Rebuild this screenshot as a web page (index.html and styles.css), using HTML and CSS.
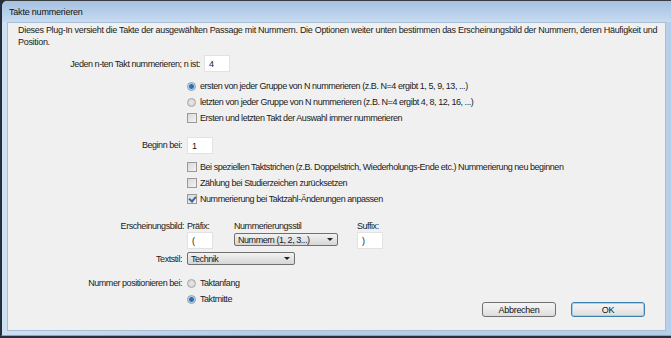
FILE: index.html
```html
<!DOCTYPE html>
<html lang="de">
<head>
    <meta charset="UTF-8">
    <title>Takte nummerieren</title>
    <link rel="stylesheet" href="styles.css">
</head>
<body>
    <div class="window">
        <div class="titlebar">Takte nummerieren</div>
        <div class="client">
            <p class="intro">Dieses Plug-In versieht die Takte der ausgewählten Passage mit Nummern. Die Optionen weiter unten bestimmen das Erscheinungsbild der Nummern, deren Häufigkeit und<br>Position.</p>

            <div class="row-first">
                <span class="lbl-wide">Jeden n-ten Takt nummerieren; n ist:</span>
                <span class="edit">4</span>
            </div>

            <div class="group group-n">
                <div class="opt"><span class="radio on"></span>ersten von jeder Gruppe von N nummerieren (z.B. N=4 ergibt 1, 5, 9, 13, ...)</div>
                <div class="opt"><span class="radio"></span>letzten von jeder Gruppe von N nummerieren (z.B. N=4 ergibt 4, 8, 12, 16, ...)</div>
                <div class="opt"><span class="check"></span>Ersten und letzten Takt der Auswahl immer nummerieren</div>
            </div>

            <div class="row row-begin">
                <span class="lbl">Beginn bei:</span>
                <span class="edit">1</span>
            </div>

            <div class="group group-reset">
                <div class="opt"><span class="check"></span>Bei speziellen Taktstrichen (z.B. Doppelstrich, Wiederholungs-Ende etc.) Nummerierung neu beginnen</div>
                <div class="opt"><span class="check"></span>Zählung bei Studierzeichen zurücksetzen</div>
                <div class="opt"><span class="check on"></span>Nummerierung bei Taktzahl-Änderungen anpassen</div>
            </div>

            <div class="row row-look">
                <span class="lbl">Erscheinungsbild:</span>
                <div class="look">
                    <div class="look-col">
                        <span class="cap">Präfix:</span>
                        <span class="edit">(</span>
                    </div>
                    <div class="look-col col-style">
                        <span class="cap">Nummerierungsstil</span>
                        <span class="combo combo-style">Nummern (1, 2, 3...)<i class="arrow"></i></span>
                    </div>
                    <div class="look-col col-suffix">
                        <span class="cap">Suffix:</span>
                        <span class="edit">)</span>
                    </div>
                </div>
            </div>

            <div class="row row-textstyle">
                <span class="lbl">Textstil:</span>
                <span class="combo combo-text">Technik<i class="arrow"></i></span>
            </div>

            <div class="row row-pos">
                <span class="lbl">Nummer positionieren bei:</span>
                <div class="pos-list">
                    <div class="opt"><span class="radio"></span>Taktanfang</div>
                    <div class="opt"><span class="radio on"></span>Taktmitte</div>
                </div>
                <div class="buttons">
                    <button class="btn">Abbrechen</button>
                    <button class="btn default">OK</button>
                </div>
            </div>
        </div>
    </div>
</body>
</html>
```

FILE: styles.css
```css
* {
    margin: 0;
    padding: 0;
    box-sizing: border-box;
}
body {
    width: 671px;
    height: 338px;
    overflow: hidden;
    background: #26303c;
    font-family: "Liberation Sans", Arial, sans-serif;
    font-size: 9px;
    letter-spacing: -0.45px;
    color: #1a1a1a;
}
.window {
    margin-left: 1px;
    width: 680px;
    height: 336px;
    border-top: 1px solid #3b3b3b;
    border-left: 1px solid #2a2a2a;
    border-bottom: 1px solid #3cc3e6;
    border-top-left-radius: 6px;
    background: linear-gradient(to right, #cfe0f2, #b3cce8 40%, #b8cfe9);
    display: flex;
    flex-direction: column;
    padding: 0 15px 4px 5px;
}
.titlebar {
    height: 21px;
    line-height: 22px;
    margin: 0 -15px 0 -5px;
    padding-left: 7px;
    background: linear-gradient(to bottom, #a4c1e2, #bcd3ec 70%, #c8dbef);
    border-top-left-radius: 6px;
    color: #111;
    letter-spacing: -0.2px;
}
.client {
    flex: 1;
    width: 659px;
    background: #f0f0f0;
    border: 1px solid #a8bdd6;
    padding: 1px 0 0 10px;
    display: flex;
    flex-direction: column;
}
.intro {
    line-height: 12px;
    white-space: nowrap;
    letter-spacing: -0.3px;
}
.row-first {
    display: flex;
    align-items: center;
    margin-top: 7px;
    height: 17px;
}
.lbl-wide {
    width: 186px;
    text-align: right;
    padding-right: 4px;
}
.edit {
    display: inline-block;
    width: 26px;
    height: 17px;
    line-height: 17px;
    background: #fff;
    border: 1px solid #e2e2e2;
    padding-left: 4px;
}
.group {
    margin-left: 169px;
    display: flex;
    flex-direction: column;
}
.group-n {
    margin-top: 6px;
}
.opt {
    display: flex;
    align-items: center;
    height: 16px;
    white-space: nowrap;
}
.radio {
    width: 9px;
    height: 9px;
    border-radius: 50%;
    border: 1px solid #a5a5a5;
    background: radial-gradient(circle, #e8e8e8, #d0d0d0);
    margin-right: 4px;
    flex-shrink: 0;
}
.radio.on {
    background: radial-gradient(circle, #2d6fb5 0 2px, #7fb2e0 2.5px, #dfe7ef 3.5px);
    border-color: #8c9bab;
}
.check {
    width: 10px;
    height: 10px;
    border: 1px solid #9a9a9a;
    background: linear-gradient(to bottom right, #d8d8d8, #f4f4f4);
    margin-right: 3px;
    flex-shrink: 0;
    position: relative;
}
.check.on::after {
    content: "";
    position: absolute;
    left: 2px;
    top: 0;
    width: 3px;
    height: 5px;
    border-right: 2px solid #3b64a4;
    border-bottom: 2px solid #3b64a4;
    transform: rotate(40deg);
}
.row {
    display: flex;
    align-items: flex-start;
}
.lbl {
    width: 169px;
    text-align: right;
    padding-right: 5px;
    flex-shrink: 0;
}
.row-begin {
    margin-top: 10px;
    align-items: center;
    height: 18px;
}
.group-reset {
    margin-top: 5px;
}
.row-look {
    margin-top: 13px;
}
.row-look .lbl {
    line-height: 12px;
    padding-right: 3px;
}
.look {
    display: flex;
}
.look-col {
    display: flex;
    flex-direction: column;
    align-items: flex-start;
}
.col-style {
    margin-left: 21px;
}
.col-suffix {
    margin-left: 19px;
}
.cap {
    line-height: 12px;
    margin-bottom: 0;
}
.col-style .combo {
    margin-top: 1px;
}
.combo {
    display: inline-flex;
    align-items: center;
    justify-content: space-between;
    height: 13px;
    padding: 0 4px 0 3px;
    border: 1px solid #707070;
    border-radius: 2px;
    background: linear-gradient(to bottom, #f2f2f2, #e4e4e4 50%, #d6d6d6);
    white-space: nowrap;
}
.combo-style {
    width: 104px;
}
.combo-text {
    width: 108px;
}
.arrow {
    width: 0;
    height: 0;
    border-left: 3px solid transparent;
    border-right: 3px solid transparent;
    border-top: 3px solid #222;
}
.row-textstyle {
    margin-top: 3px;
    align-items: center;
    height: 13px;
}
.row-pos {
    margin-top: 10px;
}
.row-pos .lbl {
    line-height: 16px;
}
.pos-list {
    display: flex;
    flex-direction: column;
}
.buttons {
    display: flex;
    gap: 15px;
    margin-left: auto;
    margin-right: 20px;
    margin-top: 27px;
}
.btn {
    width: 74px;
    height: 15px;
    flex-shrink: 0;
    font-family: "Liberation Sans", Arial, sans-serif;
    font-size: 9px;
    letter-spacing: -0.3px;
    color: #111;
    border: 1px solid #707070;
    border-radius: 3px;
    background: linear-gradient(to bottom, #f4f4f4, #ebebeb 50%, #dcdcdc);
}
.btn.default {
    border-color: #3c7fb1;
    box-shadow: inset 0 0 0 1px #9fd3f2;
}
```
